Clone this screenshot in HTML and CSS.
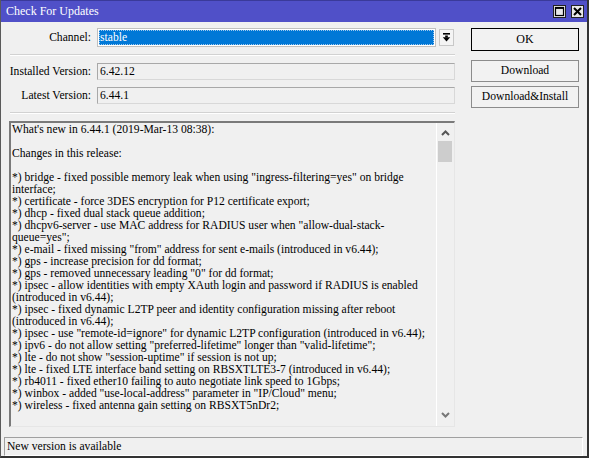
FILE: index.html
```html
<!DOCTYPE html>
<html>
<head>
<meta charset="utf-8">
<link rel="stylesheet" href="styles.css">
</head>
<body>
<div class="window">
  <div class="titlebar">
    <span class="title">Check For Updates</span>
    <div class="tbtns">
      <span class="tbtn"><svg width="11" height="11" viewBox="0 0 11 11"><rect x="1.5" y="1.5" width="8" height="8" fill="none" stroke="#000" stroke-width="1.2"/><line x1="1.5" y1="2.2" x2="9.5" y2="2.2" stroke="#000" stroke-width="1.4"/></svg></span>
      <span class="tbtn"><svg width="11" height="11" viewBox="0 0 11 11"><path d="M2 2 L9 9 M9 2 L2 9" stroke="#000" stroke-width="2"/></svg></span>
    </div>
  </div>
  <div class="body">
    <div class="main">
      <div class="row channel-row">
        <span class="label">Channel:</span>
        <div class="select"><div class="sel-value">stable</div></div>
        <div class="dd-btn"><svg width="9" height="9" viewBox="0 0 9 9"><rect x="1" y="0" width="7" height="1.6" fill="#000"/><rect x="3.2" y="2.5" width="2.6" height="2" fill="#000"/><polygon points="0.8,4.3 8.2,4.3 4.5,8.6" fill="#000"/></svg></div>
      </div>
      <div class="sep"></div>
      <div class="row">
        <span class="label">Installed Version:</span>
        <div class="field">6.42.12</div>
      </div>
      <div class="row row-gap">
        <span class="label">Latest Version:</span>
        <div class="field">6.44.1</div>
      </div>
      <div class="sep sep2"></div>
      <div class="textarea">
        <div class="text">
          <div class="ln">What's new in 6.44.1 (2019-Mar-13 08:38):</div>
          <div class="ln">&nbsp;</div>
          <div class="ln">Changes in this release:</div>
          <div class="ln">&nbsp;</div>
          <div class="ln">*) bridge - fixed possible memory leak when using "ingress-filtering=yes" on bridge</div>
          <div class="ln">interface;</div>
          <div class="ln">*) certificate - force 3DES encryption for P12 certificate export;</div>
          <div class="ln">*) dhcp - fixed dual stack queue addition;</div>
          <div class="ln">*) dhcpv6-server - use MAC address for RADIUS user when "allow-dual-stack-</div>
          <div class="ln">queue=yes";</div>
          <div class="ln">*) e-mail - fixed missing "from" address for sent e-mails (introduced in v6.44);</div>
          <div class="ln">*) gps - increase precision for dd format;</div>
          <div class="ln">*) gps - removed unnecessary leading "0" for dd format;</div>
          <div class="ln">*) ipsec - allow identities with empty XAuth login and password if RADIUS is enabled</div>
          <div class="ln">(introduced in v6.44);</div>
          <div class="ln">*) ipsec - fixed dynamic L2TP peer and identity configuration missing after reboot</div>
          <div class="ln">(introduced in v6.44);</div>
          <div class="ln">*) ipsec - use "remote-id=ignore" for dynamic L2TP configuration (introduced in v6.44);</div>
          <div class="ln">*) ipv6 - do not allow setting "preferred-lifetime" longer than "valid-lifetime";</div>
          <div class="ln">*) lte - do not show "session-uptime" if session is not up;</div>
          <div class="ln">*) lte - fixed LTE interface band setting on RBSXTLTE3-7 (introduced in v6.44);</div>
          <div class="ln">*) rb4011 - fixed ether10 failing to auto negotiate link speed to 1Gbps;</div>
          <div class="ln">*) winbox - added "use-local-address" parameter in "IP/Cloud" menu;</div>
          <div class="ln">*) wireless - fixed antenna gain setting on RBSXT5nDr2;</div>
        </div>
        <div class="scrollbar">
          <svg class="arrow up" width="9" height="6" viewBox="0 0 9 6"><path d="M1 5 L4.5 1.5 L8 5" fill="none" stroke="#555" stroke-width="2"/></svg>
          <div class="thumb"></div>
          <div class="track"></div>
          <svg class="arrow down" width="9" height="6" viewBox="0 0 9 6"><path d="M1 1 L4.5 4.5 L8 1" fill="none" stroke="#777" stroke-width="2"/></svg>
        </div>
      </div>
    </div>
    <div class="side">
      <div class="btn btn-ok">OK</div>
      <div class="btn btn-dl">Download</div>
      <div class="btn btn-di">Download&amp;Install</div>
    </div>
  </div>
  <div class="status">New version is available</div>
</div>
</body>
</html>
```

FILE: styles.css
```css
html, body {
  margin: 0;
  padding: 0;
  background: #f0f0f0;
}
.window {
  width: 589px;
  height: 458px;
  box-sizing: border-box;
  border-left: 1px solid #5a5a5a;
  border-right: 2px solid #333;
  border-bottom: 2px solid #333;
  background: #f0f0f0;
  font-family: "Liberation Serif", "Times New Roman", serif;
  font-size: 11.6px;
  color: #000;
  display: flex;
  flex-direction: column;
}
.titlebar {
  height: 22px;
  background: #5050c8;
  display: flex;
  align-items: center;
  justify-content: space-between;
  box-sizing: border-box;
  border-top: 1px solid #3a3a9a;
}
.title {
  color: #fff;
  font-size: 12px;
  padding-left: 5px;
  padding-top: 1px;
}
.tbtns {
  display: flex;
  gap: 5px;
  padding-right: 3px;
}
.tbtn {
  width: 13px;
  height: 13px;
  box-sizing: border-box;
  background: #e8e8e8;
  border: 1px solid #222;
  display: flex;
  align-items: center;
  justify-content: center;
}
.body {
  display: flex;
  height: 412px;
}
.main {
  width: 454px;
  display: flex;
  flex-direction: column;
}
.row {
  display: flex;
  align-items: center;
  height: 17px;
  margin-top: 7px;
}
.channel-row {
  margin-top: 6px;
  height: 19px;
}
.label {
  width: 90px;
  text-align: right;
  flex: none;
}
.select {
  margin-left: 6px;
  width: 339px;
  height: 19px;
  box-sizing: border-box;
  border: 1px solid #c0c0c0;
  background: #fff;
  padding: 1px;
}
.sel-value {
  height: 15px;
  background: #0078d7;
  color: #fff;
  line-height: 15px;
  padding-left: 1px;
  outline: 1px dotted #9ec9ee;
  outline-offset: -1px;
}
.dd-btn {
  margin-left: 3px;
  width: 15px;
  height: 17px;
  box-sizing: border-box;
  border: 1px solid #c8c8c8;
  background: #f4f4f4;
  display: flex;
  align-items: center;
  justify-content: center;
}
.field {
  margin-left: 6px;
  width: 358px;
  height: 17px;
  box-sizing: border-box;
  border: 1px solid #a8a8a8;
  border-right-color: #d8d8d8;
  border-bottom-color: #d8d8d8;
  padding-left: 2px;
  line-height: 15px;
}
.sep {
  margin-top: 7px;
  margin-left: 9px;
  width: 445px;
  height: 1px;
  background: #d2d2d2;
  border-bottom: 1px solid #fff;
}
.sep2 {
  margin-top: 8px;
}
.textarea {
  margin-top: 7px;
  margin-left: 8px;
  width: 446px;
  height: 306px;
  box-sizing: border-box;
  border-top: 2px solid #7a7a7a;
  border-left: 2px solid #7a7a7a;
  border-right: 1px solid #e6e6e6;
  border-bottom: 1px solid #e6e6e6;
  display: flex;
}
.text {
  flex: 1;
  padding: 1px 0 0 1px;
  line-height: 12px;
  overflow: hidden;
}
.ln {
  white-space: pre;
  height: 12px;
}
.scrollbar {
  width: 16px;
  border-left: 1px solid #fff;
  display: flex;
  flex-direction: column;
  align-items: center;
  margin-right: 1px;
}
.arrow.up {
  margin-top: 7px;
}
.thumb {
  margin-top: 5px;
  width: 14px;
  height: 21px;
  background: #cdcdcd;
}
.track {
  flex: 1;
}
.arrow.down {
  margin-bottom: 8px;
}
.side {
  margin-left: 16px;
  display: flex;
  flex-direction: column;
}
.btn {
  width: 108px;
  height: 22px;
  box-sizing: border-box;
  border: 1px solid #8c8c8c;
  display: flex;
  align-items: center;
  justify-content: center;
  background: #f2f2f2;
}
.btn-ok {
  margin-top: 6px;
  height: 23px;
  border: 1px solid #000;
  font-size: 12px;
}
.btn-dl {
  margin-top: 9px;
}
.btn-di {
  margin-top: 4px;
}
.status {
  margin-top: 7px;
  margin-left: 3px;
  width: 579px;
  height: 19px;
  box-sizing: border-box;
  border-top: 1px solid #a0a0a0;
  border-left: 1px solid #a0a0a0;
  border-right: 1px solid #fff;
  border-bottom: 1px solid #fff;
  padding-left: 2px;
  line-height: 17px;
}
```
